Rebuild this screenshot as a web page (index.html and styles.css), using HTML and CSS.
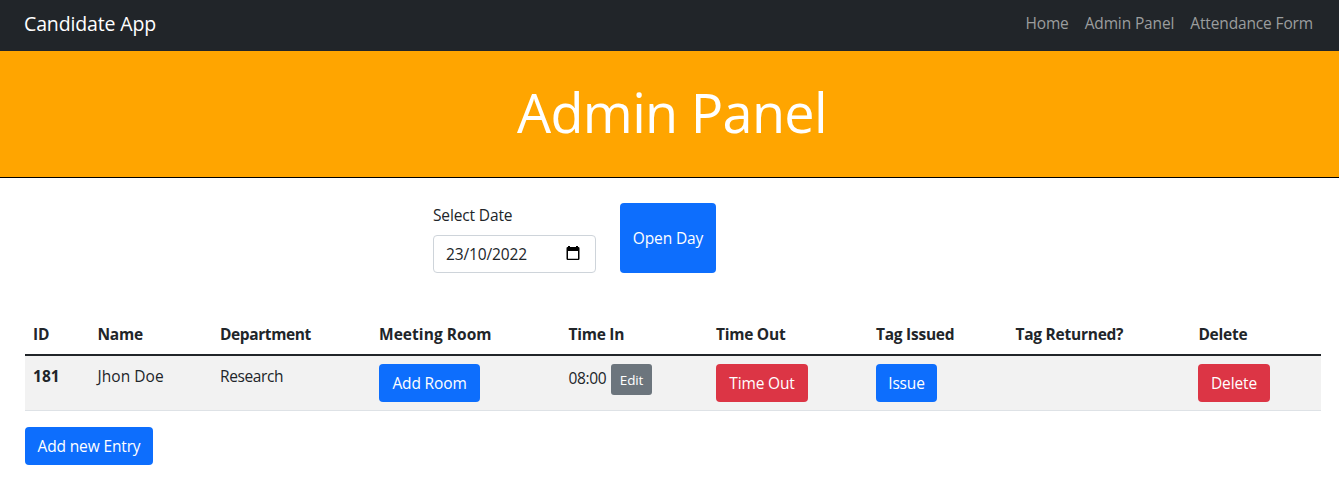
FILE: index.html
```html
<!DOCTYPE html>
<html lang="en">
<head>
<meta charset="utf-8">
<title>Candidate App</title>
<link rel="stylesheet" href="styles.css">
</head>
<body>
<nav class="navbar">
  <a class="brand">Candidate App</a>
  <div class="nav-links">
    <a>Home</a>
    <a>Admin Panel</a>
    <a>Attendance Form</a>
  </div>
</nav>
<header class="banner"><h1>Admin Panel</h1></header>
<main>
  <form class="day-form">
    <div class="field">
      <label>Select Date</label>
      <div class="date-input">
        <span>23/10/2022</span>
        <svg class="calendar" width="14" height="15" viewBox="0 0 14 15"><path fill="#000" fill-rule="evenodd" d="M2 0h2v1h6V0h2v1h.3A1.200 1.200 0 0 1 13.500 2.200v10.600a1.200 1.200 0 0 1-1.200 1.200H1.700a1.200 1.200 0 0 1-1.200-1.200V2.200A1.200 1.200 0 0 1 1.700 1H2zM2 5v7.700h10V5z"/></svg>
      </div>
    </div>
    <button type="button" class="btn primary open-day">Open Day</button>
  </form>
  <table class="entries">
    <colgroup>
      <col class="c-id"><col class="c-name"><col class="c-dept"><col class="c-room"><col class="c-in"><col class="c-out"><col class="c-issued"><col class="c-returned"><col class="c-delete">
    </colgroup>
    <thead>
      <tr><th>ID</th><th>Name</th><th class="tight">Department</th><th class="wide">Meeting Room</th><th>Time In</th><th>Time Out</th><th>Tag Issued</th><th>Tag Returned?</th><th>Delete</th></tr>
    </thead>
    <tbody>
      <tr>
        <th class="wide">181</th>
        <td class="wide">Jhon Doe</td>
        <td class="tight">Research</td>
        <td><button class="btn primary add-room">Add Room</button></td>
        <td><div class="time"><span>08:00</span><button class="btn secondary small">Edit</button></div></td>
        <td><button class="btn danger time-out">Time Out</button></td>
        <td><button class="btn primary issue">Issue</button></td>
        <td></td>
        <td><button class="btn danger delete">Delete</button></td>
      </tr>
    </tbody>
  </table>
  <button class="btn primary add-entry">Add new Entry</button>
</main>
</body>
</html>
```
FILE: styles.css
```css
* { box-sizing: border-box; }
body {
  margin: 0;
  background: #fff;
  color: #212529;
  font: 15.5px/24px "Segoe UI", "Open Sans", "Noto Sans", sans-serif;
  letter-spacing: -0.14px;
}
.navbar {
  display: flex;
  justify-content: space-between;
  align-items: center;
  height: 51px;
  padding: 0 26px 4px 24px;
  background: #212529;
}
.brand { color: #fff; font-size: 19.5px; line-height: 30px; letter-spacing: -0.13px; }
.nav-links { display: flex; gap: 16px; padding-bottom: 1px; color: #9b9d9e; }
.banner {
  height: 127px;
  padding: 26px 0 0 5px;
  background: orange;
  border-bottom: 1px solid #000;
}
h1 {
  margin: 0;
  color: #fff;
  font-size: 54px;
  font-weight: 400;
  line-height: 70px;
  letter-spacing: -0.7px;
  text-align: center;
}
main { padding: 25px 18px 0 25px; }
.day-form { display: flex; gap: 24px; height: 70px; margin: 0 0 41px 408px; }
.field { display: flex; flex-direction: column; justify-content: space-between; width: 163px; }
.date-input {
  display: flex;
  align-items: center;
  justify-content: space-between;
  height: 38px;
  padding: 0 15px 0 12px;
  border: 1px solid #ced4da;
  border-radius: 4px;
}
.calendar { margin-top: -1px; }
.btn {
  display: block;
  height: 38px;
  padding: 0;
  border: 0;
  border-radius: 4px;
  color: #fff;
  font: inherit;
  letter-spacing: inherit;
  text-align: center;
  white-space: nowrap;
}
.primary { background: #0d6efd; }
.danger { background: #dc3545; }
.secondary { background: #6c757d; }
.open-day { width: 96px; height: 70px; }
.entries { width: 1296px; table-layout: fixed; border-collapse: separate; border-spacing: 0; }
.c-id { width: 64.5px; }
.c-name { width: 122.5px; }
.c-dept { width: 159px; }
.c-room { width: 189.5px; }
.c-in { width: 147.5px; }
.c-out { width: 160px; }
.c-issued { width: 139.5px; }
.c-returned { width: 182.9px; }
.c-delete { width: 130.6px; }
.entries th, .entries td { padding: 8px; text-align: left; vertical-align: top; white-space: nowrap; }
.entries th { font-weight: 700; letter-spacing: -0.25px; }
.entries .tight { letter-spacing: -0.4px; }
.entries .wide { letter-spacing: 0.05px; }
.entries thead th { height: 42px; border-bottom: 2px solid #212529; }
.entries tbody th, .entries tbody td { height: 55px; background: #f2f2f2; border-bottom: 1px solid #dee2e6; }
.time { display: flex; gap: 5px; }
.time span { width: 37.5px; line-height: 29px; letter-spacing: -0.35px; }
.small { width: 41px; height: 31px; border-radius: 3px; font-size: 13.5px; }
.add-room { width: 101px; }
.time-out { width: 92px; }
.issue { width: 61px; }
.delete { width: 72px; margin-left: -0.4px; }
.add-entry { width: 128px; margin-top: 16px; }
```
